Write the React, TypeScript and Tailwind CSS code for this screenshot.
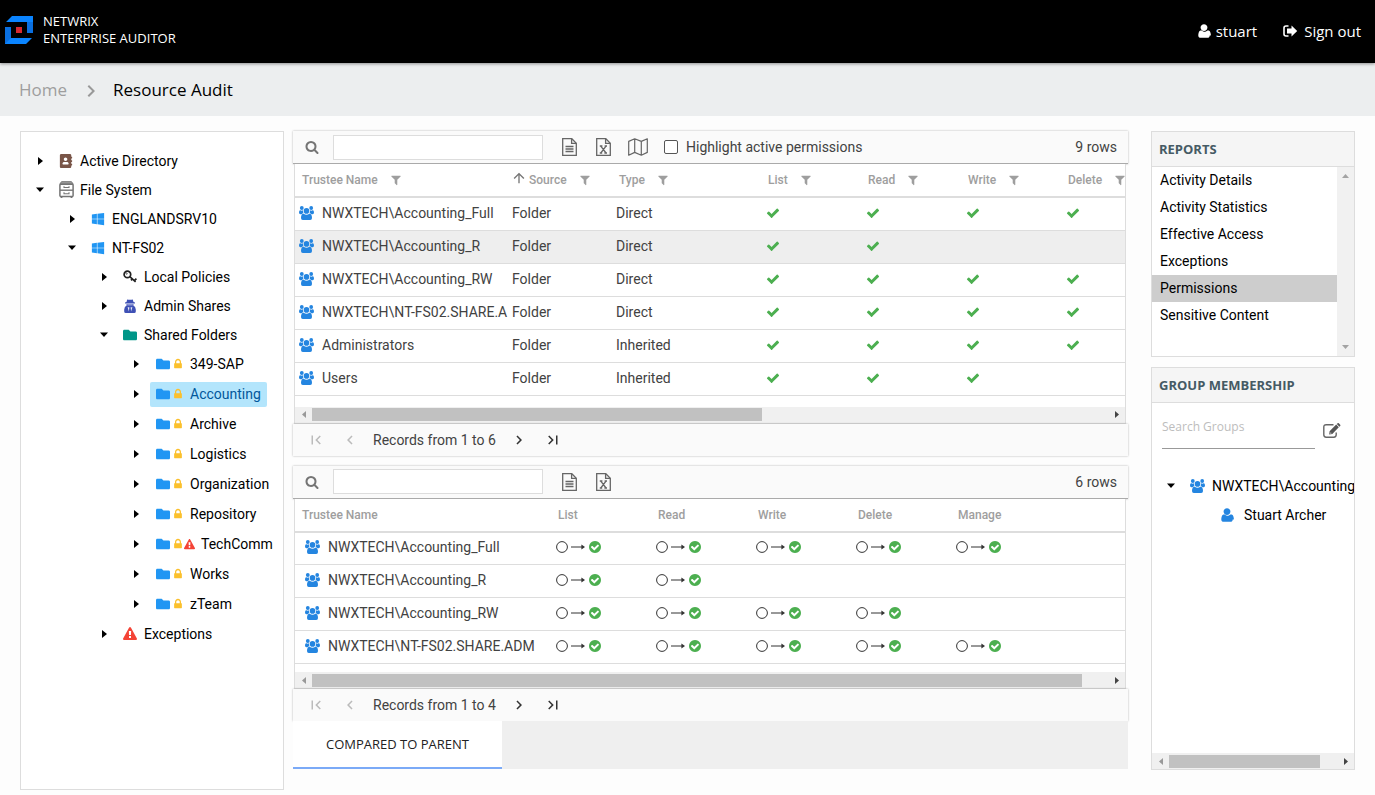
import { useState, type ReactNode } from 'react'
import { FaAddressBook, FaFolder, FaWindows } from 'react-icons/fa'
import { MdArrowUpward, MdChevronLeft, MdChevronRight, MdFirstPage, MdLastPage } from 'react-icons/md'
import clsx from 'clsx'

const glyphs = {
  user: 'M1536 1405q0 120-73 189.5t-194 69.5h-746q-121 0-194-69.5t-73-189.5q0-53 3.5-103.5t14-109 26.5-108.5 43-97.5 62-81 85.5-53.5 111.5-20q9 0 42 21.5t74.5 48 108 48 133.5 21.5 133.5-21.5 108-48 74.5-48 42-21.5q61 0 111.5 20t85.5 53.5 62 81 43 97.5 26.5 108.5 14 109 3.5 103.5zm-256-893q0 159-112.5 271.5t-271.5 112.5-271.5-112.5-112.5-271.5 112.5-271.5 271.5-112.5 271.5 112.5 112.5 271.5z',
  check: 'M1671 566q0 40-28 68l-724 724-136 136q-28 28-68 28t-68-28l-136-136-362-362q-28-28-28-68t28-68l136-136q28-28 68-28t68 28l294 295 656-657q28-28 68-28t68 28l136 136q28 28 28 68z',
  checkCircle: 'M1412 734q0-28-18-46l-91-90q-19-19-45-19t-45 19l-408 407-226-226q-19-19-45-19t-45 19l-91 90q-18 18-18 46 0 27 18 45l362 362q19 19 45 19 27 0 46-19l543-543q18-18 18-45zm252 162q0 209-103 385.5t-279.5 279.5-385.5 103-385.5-103-279.5-279.5-103-385.5 103-385.5 279.5-279.5 385.5-103 385.5 103 279.5 279.5 103 385.5z',
  search: 'M1216 832q0-185-131.5-316.5t-316.5-131.5-316.5 131.5-131.5 316.5 131.5 316.5 316.5 131.5 316.5-131.5 131.5-316.5zm512 832q0 52-38 90t-90 38q-54 0-90-38l-343-342q-179 124-399 124-143 0-273.5-55.5t-225-150-150-225-55.5-273.5 55.5-273.5 150-225 225-150 273.5-55.5 273.5 55.5 225 150 150 225 55.5 273.5q0 220-124 399l343 343q37 37 37 90z',
  filter: 'M1595 295q17 41-14 70l-493 493v742q0 42-39 59-13 5-25 5-27 0-45-19l-256-256q-19-19-19-45v-486l-493-493q-31-29-14-70 17-39 59-39h1280q42 0 59 39z',
  warning: 'M1024 1375v-190q0-14-9.5-23.5t-22.5-9.5h-192q-13 0-22.5 9.5t-9.5 23.5v190q0 14 9.5 23.5t22.5 9.5h192q13 0 22.5-9.5t9.5-23.5zm-2-374l18-459q0-12-10-19-13-11-24-11h-220q-11 0-24 11-10 7-10 21l17 457q0 10 10 16.5t24 6.5h185q14 0 23.5-6.5t10.5-16.5zm-14-934l768 1408q35 63-2 126-17 29-46.5 46t-63.5 17h-1536q-34 0-63.5-17t-46.5-46q-37-63-2-126l768-1408q17-31 47-49t65-18 65 18 47 49z',
  lock: 'M640 768h512v-192q0-106-75-181t-181-75-181 75-75 181v192zm832 96v576q0 40-28 68t-68 28h-960q-40 0-68-28t-28-68v-576q0-40 28-68t68-28h32v-192q0-184 132-316t316-132 316 132 132 316v192h32q40 0 68 28t28 68z',
}

function Glyph({ name, className }: { name: keyof typeof glyphs; className?: string }) {
  return (
    <svg viewBox="0 0 1792 1792" fill="currentColor" className={clsx('shrink-0', className)}>
      <path d={glyphs[name]} />
    </svg>
  )
}

function Logo() {
  return (
    <svg viewBox="0 0 28 28" className="size-7">
      <path d="M7 0H28V17H22V6H1Z" fill="#0a84ff" />
      <path d="M22 6H28V17H22Z" fill="#0a6fe0" />
      <path d="M0 11H6V22H27L21 28H0Z" fill="#0a84ff" />
      <path d="M0 11H6V22L0 28Z" fill="#0a6fe0" />
      <path d="M11 11h6v6h-6z" fill="#d8292f" />
    </svg>
  )
}

function SignOutIcon() {
  return (
    <svg viewBox="0 0 15 12" className="h-3 w-[15px]">
      <path d="M5.5 1H3Q1 1 1 3V9Q1 11 3 11H5.5" fill="none" stroke="currentColor" strokeWidth="1.6" />
      <path d="M8.5 0.6 14.2 6 8.5 11.4V8.5H4V3.5H8.5Z" fill="currentColor" />
    </svg>
  )
}

function GroupIcon() {
  return (
    <svg viewBox="0 0 15 14" fill="#2485e0" className="h-3.5 w-[15px] shrink-0">
      <circle cx="2.8" cy="2" r="1.9" />
      <circle cx="12.2" cy="2" r="1.9" />
      <path d="M0 6.6Q0 4.2 1.4 4.3 2.8 5 4 4.3 3.7 6 4.5 7.2 3.2 7.3 2.6 8.2H1.4Q0 8.1 0 6.6Z" />
      <path d="M15 6.6Q15 4.2 13.6 4.3 12.2 5 11 4.3 11.3 6 10.5 7.2 11.8 7.3 12.4 8.2H13.6Q15 8.1 15 6.6Z" />
      <circle cx="7.5" cy="4.9" r="2.8" />
      <path d="M2 12Q2 7.8 4.6 7.7 7.5 9.6 10.4 7.7 13 7.8 13 12 13 14 11.2 14H3.8Q2 14 2 12Z" />
    </svg>
  )
}

function CabinetIcon() {
  return (
    <svg viewBox="0 0 15 17" fill="none" stroke="#757575" className="h-[17px] w-[15px]">
      <path d="M2.5 0.7H12.5L14.2 3.2H0.8Z" fill="#9e9e9e" />
      <rect x="0.9" y="3.2" width="13.2" height="12.2" rx="1" strokeWidth="1.5" />
      <path d="M1 9.2H14" strokeWidth="1.4" />
      <path d="M5 5.2V6.5H10V5.2M5 11.3V12.7H10V11.3" strokeWidth="1.1" />
      <path d="M2.5 15.5V17M12.5 15.5V17" strokeWidth="1.8" />
    </svg>
  )
}

function KeyIcon() {
  return (
    <svg viewBox="0 0 14 13" fill="none" stroke="#222" className="h-[13px] w-3.5">
      <circle cx="4.4" cy="4.4" r="3.3" strokeWidth="1.7" />
      <circle cx="3.6" cy="3.6" r="0.7" strokeWidth="0.6" />
      <path d="M6.8 6.6 12.6 11.8M9.4 8.8 8 10.4M11.4 10.6 13.4 8.6" strokeWidth="1.7" />
    </svg>
  )
}

function AgentIcon() {
  return (
    <svg viewBox="0 0 12 14" fill="#3f51b5" className="h-3.5 w-3">
      <path d="M3.2 0.4Q6 1.2 8.8 0.4L9.5 3 11 3.6V4.4H1V3.6L2.5 3Z" />
      <path d="M2.6 5H9.4V6.4Q11.6 7.2 11.8 10.5V12.5Q11.8 14 10.2 14H1.8Q0.2 14 0.2 12.5V10.5Q0.4 7.2 2.6 6.4Z" />
      <path d="M3.2 5.4H8.8V6.3H3.2Z" fill="#c5cae9" />
      <path d="M3.6 8.2H5.4L4.9 12.4ZM6.6 8.2H8.4L7.1 12.4Z" fill="#e8eaf6" />
    </svg>
  )
}

function FileIcon({ children }: { children: ReactNode }) {
  return (
    <svg viewBox="0 0 15 18" fill="none" stroke="#666" strokeWidth="1.3" className="h-[18px] w-[15px]">
      <path d="M0.7 0.7H9.8L14.3 5.2V17.3H0.7Z" />
      <path d="M9.6 0.9V5.4H14.1" />
      {children}
    </svg>
  )
}

function CsvFileIcon() {
  return (
    <FileIcon>
      <path d="M3.5 8.5H11.5M3.5 11H11.5M3.5 13.5H11.5" />
    </FileIcon>
  )
}

function ExcelFileIcon() {
  return (
    <FileIcon>
      <path d="M4.8 8.2 10 15M10 8.2 4.8 15M3.8 8H6.4M8.6 8H11M3.8 15H6.2M8.4 15H11" />
    </FileIcon>
  )
}

function MapIcon() {
  return (
    <svg viewBox="0 0 20 18" fill="none" stroke="#666" strokeWidth="1.2" strokeLinejoin="round" className="h-[18px] w-5">
      <path d="M0.7 3.4 6.7 0.8 13.3 3.4 19.3 0.8V14.4L13.3 17.2 6.7 14.4 0.7 17.2ZM6.7 0.8V14.4M13.3 3.4V17.2" />
    </svg>
  )
}

function EditIcon() {
  return (
    <svg viewBox="0 0 18 15" className="h-[15px] w-[18px]">
      <path d="M10.5 1.7H3.2Q0.8 1.7 0.8 4V11.8Q0.8 14.2 3.2 14.2H10.8Q13.2 14.2 13.2 11.8V9.5" fill="none" stroke="#666" strokeWidth="1.4" />
      <path d="M6.2 11.4 6.6 8.2 13.2 1.6 15.8 4.2 9.3 10.9ZM13.8 1 14.6 0.2Q15.2-0.2 15.8 0.3L17.2 1.7Q17.7 2.3 17.2 2.9L16.4 3.7Z" fill="#555" />
      <path d="M7.3 10.1 8.3 10.2" stroke="#fff" strokeWidth="0.9" />
    </svg>
  )
}

function Caret({ open }: { open?: boolean }) {
  return (
    <button type="button" aria-label={open ? 'Collapse' : 'Expand'} className="flex size-3 shrink-0 items-center justify-center">
      {open ? (
        <svg viewBox="0 0 8 5" className="h-[5px] w-2"><path d="M0 0.5H8L4 5Z" /></svg>
      ) : (
        <svg viewBox="0 0 5 8" className="h-2 w-[5px]"><path d="M0 0V8L5 4Z" /></svg>
      )}
    </button>
  )
}

interface ScrollbarProps {
  thumb: number
}

function Scrollbar({ thumb }: ScrollbarProps) {
  return (
    <div className="flex h-4 items-center bg-[#f0f0f0]" aria-hidden="true">
      <span className="flex w-[17px] justify-center">
        <svg viewBox="0 0 4 7" fill="#999" className="h-[7px] w-1"><path d="M4 0V7L0 3.5Z" /></svg>
      </span>
      <div className="flex-1">
        <div className="h-[13px] bg-[#c1c1c1]" style={{ width: `${thumb}%` }} />
      </div>
      <span className="flex w-[17px] justify-center">
        <svg viewBox="0 0 4 7" fill="#444" className="h-[7px] w-1"><path d="M0 0V7L4 3.5Z" /></svg>
      </span>
    </div>
  )
}

interface TreeRowProps {
  label: string
  icon: ReactNode
  open?: boolean
  children?: ReactNode
}

function TreeRow({ label, icon, open, children }: TreeRowProps) {
  return (
    <li>
      <div className="flex h-[29px] items-center">
        <Caret open={open} />
        <span className="ml-3 flex w-4 justify-center">{icon}</span>
        <span className="ml-1.5 whitespace-nowrap">{label}</span>
      </div>
      {children}
    </li>
  )
}

const shares = ['349-SAP', 'Accounting', 'Archive', 'Logistics', 'Organization', 'Repository', 'TechComm', 'Works', 'zTeam']

function ResourceTree() {
  const [selected, setSelected] = useState('Accounting')

  return (
    <nav className="w-66 shrink-0 overflow-hidden border border-[#ddd] bg-white pt-3.5 pl-[13px] text-black">
      <ul>
        <TreeRow label="Active Directory" icon={<FaAddressBook size={14} color="#795548" />} />
        <TreeRow label="File System" icon={<CabinetIcon />} open>
          <ul className="pl-8">
            <TreeRow label="ENGLANDSRV10" icon={<FaWindows size={14} color="#2196f3" />} />
            <TreeRow label="NT-FS02" icon={<FaWindows size={14} color="#2196f3" />} open>
              <ul className="pl-8">
                <TreeRow label="Local Policies" icon={<KeyIcon />} />
                <TreeRow label="Admin Shares" icon={<AgentIcon />} />
                <TreeRow label="Shared Folders" icon={<FaFolder size={14} color="#009688" />} open>
                  <ul className="pl-8">
                    {shares.map((share) => (
                      <li key={share} className="flex h-[30px] items-center">
                        <Caret />
                        <button
                          type="button"
                          onClick={() => setSelected(share)}
                          className={clsx(
                            'ml-2 flex h-[25px] items-center rounded-xs px-1.5 whitespace-nowrap',
                            share === selected && 'bg-[#b3e5fc] text-[#01579b]'
                          )}
                        >
                          <FaFolder size={14} color="#2196f3" className="shrink-0" />
                          <Glyph name="lock" className="ml-0.5 size-3 text-[#fbc02d]" />
                          {share === 'TechComm' && <Glyph name="warning" className="size-[11px] text-[#f44336]" />}
                          <span className="ml-1.5">{share}</span>
                        </button>
                      </li>
                    ))}
                  </ul>
                </TreeRow>
                <TreeRow label="Exceptions" icon={<Glyph name="warning" className="size-3.5 text-[#f44336]" />} />
              </ul>
            </TreeRow>
          </ul>
        </TreeRow>
      </ul>
    </nav>
  )
}

interface ToolbarProps {
  id: string
  rows: number
  children?: ReactNode
}

function Toolbar({ id, rows, children }: ToolbarProps) {
  return (
    <div className="flex h-[33px] items-center border-b border-[#aaa] bg-[#fafafa] pr-[11px] pl-3 shadow-[0_0_2px_rgba(0,0,0,0.3)]">
      <label htmlFor={id} title="Search" className="text-[#757575]">
        <Glyph name="search" className="size-3.5" />
      </label>
      <input id={id} type="text" aria-label="Search" className="ml-3.5 h-[25px] w-[210px] border border-[#ddd] bg-white px-2" />
      <button type="button" aria-label="Export to CSV" className="ml-[19px]"><CsvFileIcon /></button>
      <button type="button" aria-label="Export to Excel" className="ml-[19px]"><ExcelFileIcon /></button>
      {children}
      <span className="ml-auto">{rows} rows</span>
    </div>
  )
}

function Pager({ to }: { to: number }) {
  return (
    <div className="flex h-8 items-center bg-[#fafafa] pl-3.5 shadow-[0_0_2px_rgba(0,0,0,0.3)]">
      <button type="button" aria-label="First page" disabled className="text-[#bbb]"><MdFirstPage size={18} /></button>
      <button type="button" aria-label="Previous page" disabled className="ml-4 text-[#bbb]"><MdChevronLeft size={18} /></button>
      <span className="mx-3.5">Records from 1 to {to}</span>
      <button type="button" aria-label="Next page" className="text-[#333]"><MdChevronRight size={18} /></button>
      <button type="button" aria-label="Last page" className="ml-4 text-[#333]"><MdLastPage size={18} /></button>
    </div>
  )
}

const accessColumns = ['List', 'Read', 'Write', 'Delete']

const trustees = [
  { name: 'NWXTECH\\Accounting_Full', type: 'Direct', access: 4 },
  { name: 'NWXTECH\\Accounting_R', type: 'Direct', access: 2 },
  { name: 'NWXTECH\\Accounting_RW', type: 'Direct', access: 4 },
  { name: 'NWXTECH\\NT-FS02.SHARE.A', type: 'Direct', access: 4 },
  { name: 'Administrators', type: 'Inherited', access: 4 },
  { name: 'Users', type: 'Inherited', access: 3 },
]

function FilterHeader({ label, sorted }: { label: string; sorted?: boolean }) {
  return (
    <th scope="col" className={clsx('overflow-hidden p-0 font-medium', sorted ? 'pl-[3px]' : 'pl-[7px]')}>
      <span className="flex items-center whitespace-nowrap">
        {sorted && <MdArrowUpward size={16} className="mr-0.5 mb-1 shrink-0 text-[#757575]" />}
        {label}
        <button type="button" aria-label={`Filter ${label}`} className="ml-3">
          <Glyph name="filter" className="size-3" />
        </button>
      </span>
    </th>
  )
}

function PermissionsTable() {
  return (
    <div className="mr-0.5 ml-px border-x border-b border-[#ddd] bg-white">
      <table className="w-full table-fixed border-collapse text-left">
        <colgroup>
          <col className="w-[213px]" />
          <col className="w-[104px]" />
          <col className="w-[149px]" />
          <col className="w-[100px]" />
          <col className="w-[100px]" />
          <col className="w-[100px]" />
          <col />
        </colgroup>
        <thead>
          <tr className="h-[33px] border-b-2 border-[#ddd] text-xs text-[#9e9e9e]">
            <FilterHeader label="Trustee Name" />
            <FilterHeader label="Source" sorted />
            <FilterHeader label="Type" />
            {accessColumns.map((column) => <FilterHeader key={column} label={column} />)}
          </tr>
        </thead>
        <tbody>
          {trustees.map((row, index) => (
            <tr key={row.name} className={clsx('h-[33px] border-b border-[#ddd]', index === 1 && 'bg-[#eee]')}>
              <td className="overflow-hidden p-0 pb-0.5 pl-1">
                <span className="flex items-center gap-2 whitespace-nowrap">
                  <GroupIcon />
                  {row.name}
                </span>
              </td>
              <td className="p-0 pb-0.5 pl-1">Folder</td>
              <td className="p-0 pb-0.5 pl-1">{row.type}</td>
              {accessColumns.map((column, i) => (
                <td key={column} className="p-0 pb-0.5 pl-[5px]">
                  {i < row.access && <Glyph name="check" className="size-3.5 text-[#4caf50]" />}
                </td>
              ))}
            </tr>
          ))}
        </tbody>
      </table>
      <div className="pt-[11px]"><Scrollbar thumb={56.5} /></div>
    </div>
  )
}

const changeColumns = ['List', 'Read', 'Write', 'Delete', 'Manage']

const changes = [
  { name: 'NWXTECH\\Accounting_Full', access: 5 },
  { name: 'NWXTECH\\Accounting_R', access: 2 },
  { name: 'NWXTECH\\Accounting_RW', access: 4 },
  { name: 'NWXTECH\\NT-FS02.SHARE.ADM', access: 5 },
]

function Granted() {
  return (
    <span className="flex items-center gap-[3px]">
      <svg viewBox="0 0 12 12" className="size-3"><circle cx="6" cy="6" r="5.4" fill="none" stroke="#333" /></svg>
      <svg viewBox="0 0 14 6" className="h-1.5 w-3.5">
        <path d="M0 3H12" fill="none" stroke="#333" />
        <path d="M10.4 0.6 14 3 10.4 5.4Z" fill="#333" />
      </svg>
      <Glyph name="checkCircle" className="size-3.5 text-[#4caf50]" />
    </span>
  )
}

function ComparisonTable() {
  return (
    <div className="mr-0.5 ml-px border-x border-b border-[#ddd] bg-white">
      <table className="w-full table-fixed border-collapse text-left">
        <colgroup>
          <col className="w-64" />
          <col className="w-[100px]" />
          <col className="w-[100px]" />
          <col className="w-[100px]" />
          <col className="w-[100px]" />
          <col />
        </colgroup>
        <thead>
          <tr className="h-[33px] border-b-2 border-[#ddd] text-xs text-[#9e9e9e]">
            <th scope="col" className="p-0 pl-[7px] font-medium">Trustee Name</th>
            {changeColumns.map((column) => (
              <th key={column} scope="col" className="p-0 pl-[7px] font-medium">{column}</th>
            ))}
          </tr>
        </thead>
        <tbody>
          {changes.map((row) => (
            <tr key={row.name} className="h-[33px] border-b border-[#ddd]">
              <td className="overflow-hidden p-0 pb-0.5 pl-2.5">
                <span className="flex items-center gap-2 whitespace-nowrap">
                  <GroupIcon />
                  {row.name}
                </span>
              </td>
              {changeColumns.map((column, i) => (
                <td key={column} className="p-0 pb-0.5 pl-[5px]">{i < row.access && <Granted />}</td>
              ))}
            </tr>
          ))}
        </tbody>
      </table>
      <div className="pt-2"><Scrollbar thumb={96.7} /></div>
    </div>
  )
}

const reports = ['Activity Details', 'Activity Statistics', 'Effective Access', 'Exceptions', 'Permissions', 'Sensitive Content']

function PanelTitle({ children }: { children: string }) {
  return (
    <h2 className="flex h-[35px] items-center border-b border-[#ddd] bg-[#f5f5f5] px-[7px] font-['Open_Sans',sans-serif] text-[13px] font-bold text-[#455a64]">
      {children}
    </h2>
  )
}

function ReportsPanel() {
  const [active, setActive] = useState('Permissions')

  return (
    <section className="border border-[#ddd] bg-white text-black">
      <PanelTitle>REPORTS</PanelTitle>
      <div className="flex h-[189px]">
        <ul className="flex-1">
          {reports.map((report) => (
            <li key={report}>
              <button
                type="button"
                onClick={() => setActive(report)}
                className={clsx('h-[27px] w-full px-2 pb-0.5 text-left', report === active && 'bg-[#cdcdcd]')}
              >
                {report}
              </button>
            </li>
          ))}
        </ul>
        <div className="flex w-[17px] flex-col items-center justify-between bg-[#f1f1f1] py-[7px]" aria-hidden="true">
          <svg viewBox="0 0 7 4" fill="#a3a3a3" className="h-1 w-[7px]"><path d="M0 4H7L3.5 0Z" /></svg>
          <svg viewBox="0 0 7 4" fill="#a3a3a3" className="h-1 w-[7px]"><path d="M0 0H7L3.5 4Z" /></svg>
        </div>
      </div>
    </section>
  )
}

function GroupPanel() {
  return (
    <section className="flex flex-1 flex-col overflow-hidden border border-[#ddd] bg-white text-black">
      <PanelTitle>GROUP MEMBERSHIP</PanelTitle>
      <div className="flex h-[46px] items-end pr-[13px] pl-2.5">
        <input
          type="text"
          aria-label="Search Groups"
          placeholder="Search Groups"
          className="h-11 w-full min-w-0 border-b border-[#999] pb-px font-['Open_Sans',sans-serif] text-xs placeholder:text-[#bdbdbd]"
        />
        <button type="button" aria-label="Edit groups" className="mb-[11px] ml-2 shrink-0"><EditIcon /></button>
      </div>
      <ul className="mt-[22px] flex-1 pl-[13px]">
        <li>
          <div className="flex h-[29px] items-center whitespace-nowrap">
            <Caret open />
            <span className="ml-[13px]"><GroupIcon /></span>
            <span className="ml-[7px]">NWXTECH\Accounting_Full</span>
          </div>
          <ul className="pl-[54px]">
            <li className="flex h-[29px] items-center">
              <Glyph name="user" className="size-4 text-[#2485e0]" />
              <span className="ml-[9px]">Stuart Archer</span>
            </li>
          </ul>
        </li>
      </ul>
      <Scrollbar thumb={90} />
    </section>
  )
}

export default function App() {
  return (
    <div className="flex min-h-screen flex-col bg-[#fdfdfd] font-[Roboto,sans-serif] text-sm text-[#424242]">
      {/* Header */}
      <header className="relative flex h-[63px] items-center justify-between bg-black pr-3.5 pl-[5px] font-['Open_Sans',sans-serif] text-white shadow-[0_1px_3px_rgba(0,0,0,0.4)]">
        <a href="#" className="flex items-center gap-2.5 pb-1 text-[13px] leading-[17px]">
          <Logo />
          <span>NETWRIX<br />ENTERPRISE AUDITOR</span>
        </a>
        <div className="flex items-center gap-[26px] text-[15px]">
          <a href="#" className="flex items-center gap-1">
            <Glyph name="user" className="size-4" />
            stuart
          </a>
          <a href="#" className="flex items-center gap-1.5">
            <SignOutIcon />
            Sign out
          </a>
        </div>
      </header>

      {/* Breadcrumb */}
      <div className="flex h-[53px] items-center bg-[#eceeef] px-[19px] pt-0.5 font-['Open_Sans',sans-serif] text-[17px]">
        <a href="#" className="text-[#9e9e9e]">Home</a>
        <MdChevronRight size={24} className="mr-2.5 ml-3 text-[#999]" />
        <span className="text-black">Resource Audit</span>
      </div>

      <main className="flex flex-1 px-5 pt-[15px] pb-[5px]">
        <ResourceTree />

        {/* Results */}
        <div className="ml-[9px] flex min-w-0 flex-1 flex-col">
          <Toolbar id="search-permissions" rows={9}>
            <button type="button" aria-label="Show map" className="ml-[17px]"><MapIcon /></button>
            <label className="ml-4 flex items-center gap-2">
              <input type="checkbox" className="size-3.5 appearance-none rounded-xs border border-[#555] bg-white checked:bg-[#555]" />
              Highlight active permissions
            </label>
          </Toolbar>
          <PermissionsTable />
          <Pager to={6} />

          <div className="mt-2.5">
            <Toolbar id="search-comparison" rows={6} />
            <ComparisonTable />
            <Pager to={4} />
          </div>
          <div className="relative flex h-12 bg-[#efefef]" role="tablist">
            <button
              type="button"
              role="tab"
              aria-selected="true"
              className="w-[209px] border-b-2 border-[#7baaf7] bg-white font-['Open_Sans',sans-serif] text-[13px] text-[#222]"
            >
              COMPARED TO PARENT
            </button>
          </div>
        </div>

        <aside className="ml-[23px] flex w-51 shrink-0 flex-col gap-2.5 pb-5">
          <ReportsPanel />
          <GroupPanel />
        </aside>
      </main>
    </div>
  )
}
